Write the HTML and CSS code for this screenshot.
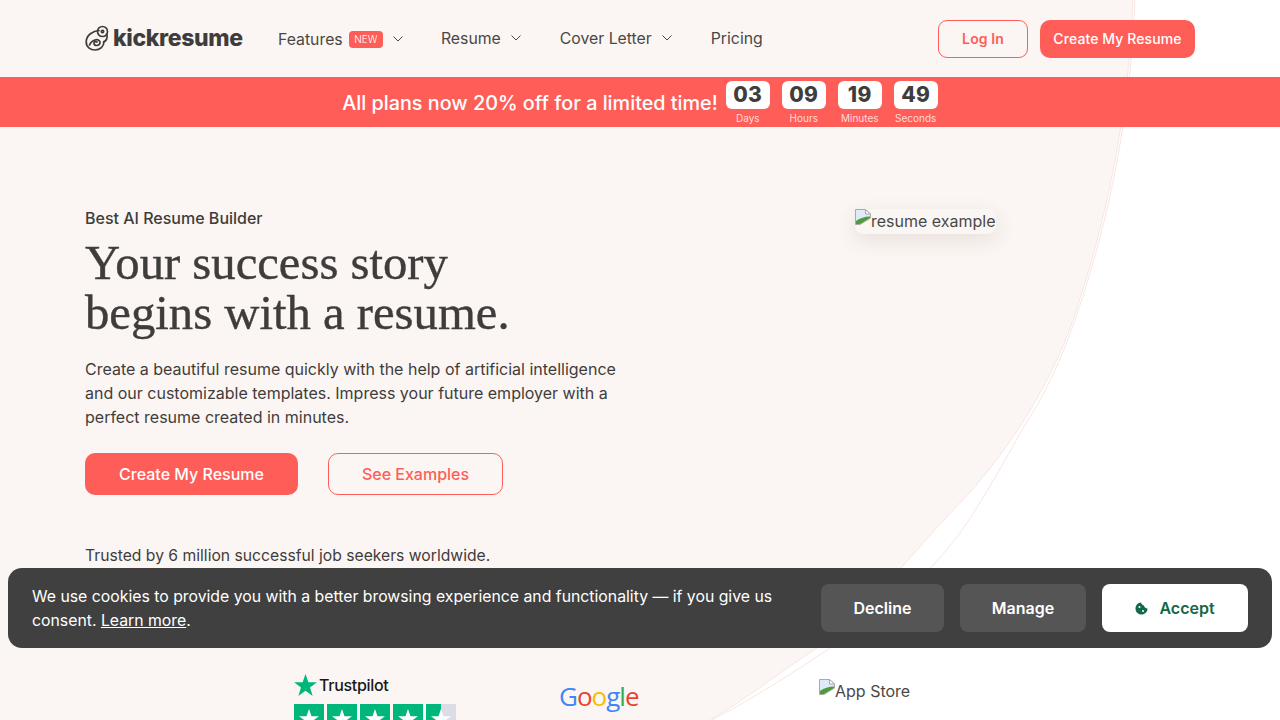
FILE: index.html
```html
<!DOCTYPE html>
<html lang="en">
<head>
    <meta charset="UTF-8">
    <meta name="viewport" content="width=device-width, initial-scale=1.0">
    <title>Kickresume</title>
    <link rel="stylesheet" href="styles.css">
</head>
<body>
    <!-- big background shape behind header and hero -->
    <svg class="blob" width="1280" height="720" viewBox="0 0 1280 720">
        <path d="M1133 0C1129 100 1112 205 1073 320C1050 385 1010 450 960 503C905 560 860 622 817 648C780 672 745 700 710 720L0 720L0 0Z" fill="#fbf6f3"/>
        <path d="M1133 0C1129 100 1112 205 1073 320C1050 385 1010 450 960 503C905 560 860 622 817 648C780 672 745 700 710 720" fill="none" stroke="#f8e6e3" stroke-width="1"/>
        <path d="M1135 0C1131 100 1114 207 1075 320C1065 350 1045 395 1028 420C1010 450 985 498 960 533C920 585 880 620 830 648C790 675 750 700 712 720" fill="none" stroke="#f8e6e3" stroke-width="1"/>
    </svg>

    <header class="header">
        <a class="logo">
            <svg width="24" height="26" viewBox="0 0 24 26" fill="none" stroke="#3f3d3b" stroke-width="1.7" stroke-linecap="round">
                <path d="M14 5.500C8 6 1.500 10 1.200 16.500C1 22 5.500 25 10 25C15 25 19 21.500 19 16.500"/>
                <circle cx="17.500" cy="6.500" r="5"/>
                <circle cx="17.500" cy="6.500" r="1.200"/>
                <path d="M22 9.500C22.500 13 21 16 18.500 17"/>
                <path d="M4.500 20C7 14 15 13 15 17.500C15 21 9.500 21.500 9 18.500C8.800 17 10.500 16 12 17"/>
            </svg>
            <span>kickresume</span>
        </a>
        <nav class="nav">
            <a class="nav-item nav-features">Features <span class="badge">NEW</span>
                <svg class="chev" width="10" height="6" viewBox="0 0 10 6"><path d="M.5.5L5 5L9.500.5"/></svg></a>
            <a class="nav-item">Resume
                <svg class="chev" width="10" height="6" viewBox="0 0 10 6"><path d="M.5.5L5 5L9.500.5"/></svg></a>
            <a class="nav-item">Cover Letter
                <svg class="chev" width="10" height="6" viewBox="0 0 10 6"><path d="M.5.5L5 5L9.500.5"/></svg></a>
            <a class="nav-item">Pricing</a>
        </nav>
        <div class="header-btns">
            <a class="btn-login">Log In</a>
            <a class="btn-create">Create My Resume</a>
        </div>
    </header>

    <div class="promo">
        <span class="promo-text">All plans now 20% off for a limited time!</span>
        <div class="count"><b>03</b><small>Days</small></div>
        <div class="count"><b>09</b><small>Hours</small></div>
        <div class="count"><b>19</b><small>Minutes</small></div>
        <div class="count"><b>49</b><small>Seconds</small></div>
    </div>

    <main class="hero">
        <div class="hero-left">
            <p class="eyebrow">Best AI Resume Builder</p>
            <h1>Your success story<br>begins with a resume.</h1>
            <p class="lead">Create a beautiful resume quickly with the help of artificial intelligence and our customizable templates. Impress your future employer with a perfect resume created in minutes.</p>
            <div class="hero-btns">
                <a class="btn-primary">Create My Resume</a>
                <a class="btn-outline">See Examples</a>
            </div>
            <p class="trusted">Trusted by 6 million successful job seekers worldwide.</p>
        </div>
        <div class="hero-right">
            <span class="broken resume-img">
                <svg class="broken-icon" width="16" height="16" viewBox="0 0 16 16">
                    <path d="M.5 15.500V.5H10.500L15.500 5V9L5 15.500Z" fill="#dfe9f8" stroke="#a9a9a9"/>
                    <path d="M10.500 .5V5H15.500Z" fill="#fff" stroke="#a9a9a9"/>
                    <path d="M1 15V12C5 9 10 7.500 15 7.500V9L5 15Z" fill="#4f9a3c"/>
                </svg>resume example</span>
        </div>
    </main>

    <section class="logos">
        <div class="trustpilot">
            <div class="tp-name">
                <svg width="23" height="22" viewBox="0 0 24 23"><path d="M12 0L15 8.700H24L16.700 14L19.500 23L12 17.500L4.500 23L7.300 14L0 8.700H9Z" fill="#00b67a"/></svg>
                <span>Trustpilot</span>
            </div>
            <div class="tp-stars">
                <i><svg viewBox="0 0 24 23"><path d="M12 0L15 8.700H24L16.700 14L19.500 23L12 17.500L4.500 23L7.300 14L0 8.700H9Z" fill="#fff"/></svg></i>
                <i><svg viewBox="0 0 24 23"><path d="M12 0L15 8.700H24L16.700 14L19.500 23L12 17.500L4.500 23L7.300 14L0 8.700H9Z" fill="#fff"/></svg></i>
                <i><svg viewBox="0 0 24 23"><path d="M12 0L15 8.700H24L16.700 14L19.500 23L12 17.500L4.500 23L7.300 14L0 8.700H9Z" fill="#fff"/></svg></i>
                <i><svg viewBox="0 0 24 23"><path d="M12 0L15 8.700H24L16.700 14L19.500 23L12 17.500L4.500 23L7.300 14L0 8.700H9Z" fill="#fff"/></svg></i>
                <i class="half"><svg viewBox="0 0 24 23"><path d="M12 0L15 8.700H24L16.700 14L19.500 23L12 17.500L4.500 23L7.300 14L0 8.700H9Z" fill="#fff"/></svg></i>
            </div>
        </div>
        <div class="google"><span class="g-blue">G</span><span class="g-red">o</span><span class="g-yellow">o</span><span class="g-blue">g</span><span class="g-green">l</span><span class="g-red">e</span></div>
        <span class="broken appstore">
            <svg class="broken-icon" width="16" height="16" viewBox="0 0 16 16">
                <path d="M.5 15.500V.5H10.500L15.500 5V9L5 15.500Z" fill="#dfe9f8" stroke="#a9a9a9"/>
                <path d="M10.500 .5V5H15.500Z" fill="#fff" stroke="#a9a9a9"/>
                <path d="M1 15V12C5 9 10 7.500 15 7.500V9L5 15Z" fill="#4f9a3c"/>
            </svg>App Store</span>
    </section>

    <div class="cookie">
        <p>We use cookies to provide you with a better browsing experience and functionality — if you give us consent. <a>Learn more</a>.</p>
        <div class="cookie-btns">
            <a class="cookie-btn btn-decline">Decline</a>
            <a class="cookie-btn btn-manage">Manage</a>
            <a class="cookie-btn btn-accept">
                <svg width="13" height="13" viewBox="0 0 13 13">
                    <path d="M6 .5C6.500 2.500 8 3.500 9 3.500C9 5 10.500 6.500 12.500 6.500C12.500 10 9.800 12.500 6.500 12.500C3 12.500.5 10 .5 6.500C.5 3.200 3 .7 6 .5Z" fill="#12684a"/>
                    <circle cx="4.500" cy="5" r="1" fill="#fff"/>
                    <circle cx="8" cy="9" r="1" fill="#fff"/>
                </svg>
                Accept</a>
        </div>
    </div>
</body>
</html>
```

FILE: styles.css
```css
html, body {
    margin: 0;
    height: 720px;
    overflow: hidden;
}

body {
    position: relative;
    background: #fff;
    color: #3f3d3b;
    font-family: Inter, "Liberation Sans", sans-serif;
}

p {
    margin: 0;
}

.blob {
    position: absolute;
    top: 0;
    left: 0;
}

.header {
    position: relative;
    height: 77px;
    padding: 0 85px;
    display: flex;
    align-items: center;
}

.logo {
    display: flex;
    align-items: center;
    gap: 4px;
    width: 193px;
    font-size: 23px;
    font-weight: 800;
    letter-spacing: -0.35px;
    margin-top: -2px;
}

.nav {
    display: flex;
    align-items: center;
    gap: 39px;
    flex: 1;
    font-size: 15.8px;
    margin-top: -1px;
}

.nav-item {
    display: flex;
    align-items: center;
    gap: 6px;
    color: #4a4846;
}

.nav-features {
    margin-top: 2px;
    margin-right: -1px;
}

.chev {
    fill: none;
    stroke: #4a4846;
    margin-left: 4px;
}

.badge {
    background: #ff5d58;
    color: #fff;
    font-size: 10px;
    font-weight: 300;
    padding: 3px 5.5px;
    border-radius: 4px;
    line-height: 11px;
}

.header-btns {
    display: flex;
    gap: 12px;
    font-size: 14px;
    font-weight: 500;
    letter-spacing: 0.1px;
}

.btn-login {
    box-sizing: border-box;
    width: 90px;
    height: 38px;
    line-height: 36px;
    text-align: center;
    border: 1px solid #ff5d58;
    border-radius: 9px;
    color: #ff5d58;
    font-weight: 600;
}

.btn-create {
    width: 155px;
    height: 38px;
    line-height: 38px;
    text-align: center;
    background: #ff5d58;
    border-radius: 10px;
    color: #fff;
}

.promo {
    position: relative;
    height: 50px;
    background: #ff5d58;
    display: flex;
    justify-content: center;
    color: #fff;
    gap: 12px;
}

.promo-text {
    font-size: 19.8px;
    font-weight: 500;
    line-height: 52px;
    margin-right: -4px;
}

.count {
    width: 44px;
    padding-top: 4px;
    text-align: center;
}

.count b {
    display: block;
    height: 28px;
    line-height: 27px;
    background: #fff;
    color: #3f3d3b;
    border-radius: 6px;
    font-size: 21px;
    font-weight: 800;
    letter-spacing: 0.3px;
}

.count small {
    display: block;
    font-size: 10px;
    line-height: 18px;
    color: #ffdcda;
    white-space: nowrap;
}

.hero {
    position: relative;
    display: flex;
    padding: 82px 0 0 85px;
}

.hero-left {
    width: 770px;
}

.eyebrow {
    font-size: 16px;
    font-weight: 500;
    line-height: 19px;
}

h1 {
    margin: 10px 0 0;
    font-family: "Liberation Serif", serif;
    font-weight: 400;
    font-size: 48.7px;
    line-height: 50px;
    -webkit-text-stroke: 0.4px #3f3d3b;
}

.lead {
    width: 545px;
    margin-top: 19px;
    font-size: 16px;
    line-height: 24px;
}

.hero-btns {
    display: flex;
    gap: 30px;
    margin-top: 24px;
    font-size: 16px;
    font-weight: 500;
}

.btn-primary {
    width: 213px;
    height: 42px;
    line-height: 42px;
    text-align: center;
    background: #ff5d58;
    border-radius: 10px;
    color: #fff;
}

.btn-outline {
    box-sizing: border-box;
    width: 175px;
    height: 42px;
    line-height: 40px;
    text-align: center;
    border: 1px solid #ff5d58;
    border-radius: 10px;
    color: #ff5d58;
}

.trusted {
    margin-top: 51px;
    font-size: 15.7px;
    line-height: 20px;
}

.broken {
    display: inline-flex;
    align-items: flex-start;
    font-size: 16px;
    line-height: 25px;
    color: #4a4846;
}

.broken-icon {
    flex: none;
}

.resume-img {
    background: #faf6f3;
    border-radius: 8px;
    box-shadow: 0 6px 20px rgba(90, 60, 50, 0.12);
}

.logos {
    position: absolute;
    top: 674px;
    left: 294px;
    display: flex;
    align-items: flex-start;
}

.trustpilot {
    width: 265px;
}

.tp-name {
    display: flex;
    align-items: center;
    gap: 2px;
    font-size: 16px;
    font-weight: 500;
    color: #191919;
    letter-spacing: -0.3px;
}

.tp-stars {
    display: flex;
    gap: 3px;
    margin-top: 8px;
}

.tp-stars i {
    display: block;
    box-sizing: border-box;
    width: 30px;
    height: 30px;
    padding: 5px;
    background: #00b67a;
}

.tp-stars i.half {
    background: linear-gradient(to right, #00b67a 50%, #dcdce6 50%);
}

.google {
    width: 260px;
    font-family: "Open Sans", sans-serif;
    font-size: 26px;
    font-weight: 500;
    line-height: 44px;
    letter-spacing: -1px;
}

.g-blue { color: #4285f4; }
.g-red { color: #ea4335; }
.g-yellow { color: #fbbc05; }
.g-green { color: #34a853; }

.appstore {
    margin-top: 5px;
}

.cookie {
    position: absolute;
    top: 568px;
    left: 8px;
    right: 8px;
    box-sizing: border-box;
    height: 80px;
    padding: 0 24px;
    display: flex;
    align-items: center;
    justify-content: space-between;
    background: #404040;
    border-radius: 14px;
    color: #fff;
}

.cookie p {
    width: 760px;
    padding-top: 2px;
    font-size: 15.8px;
    line-height: 24px;
}

.cookie p a {
    text-decoration: underline;
}

.cookie-btns {
    display: flex;
    gap: 16px;
}

.cookie-btn {
    height: 48px;
    line-height: 48px;
    text-align: center;
    border-radius: 8px;
    font-size: 16px;
    font-weight: 600;
}

.btn-decline {
    width: 123px;
    background: #555;
}

.btn-manage {
    width: 126px;
    background: #555;
}

.btn-accept {
    width: 146px;
    background: #fff;
    color: #12684a;
    display: flex;
    align-items: center;
    justify-content: center;
    gap: 11px;
}
```
